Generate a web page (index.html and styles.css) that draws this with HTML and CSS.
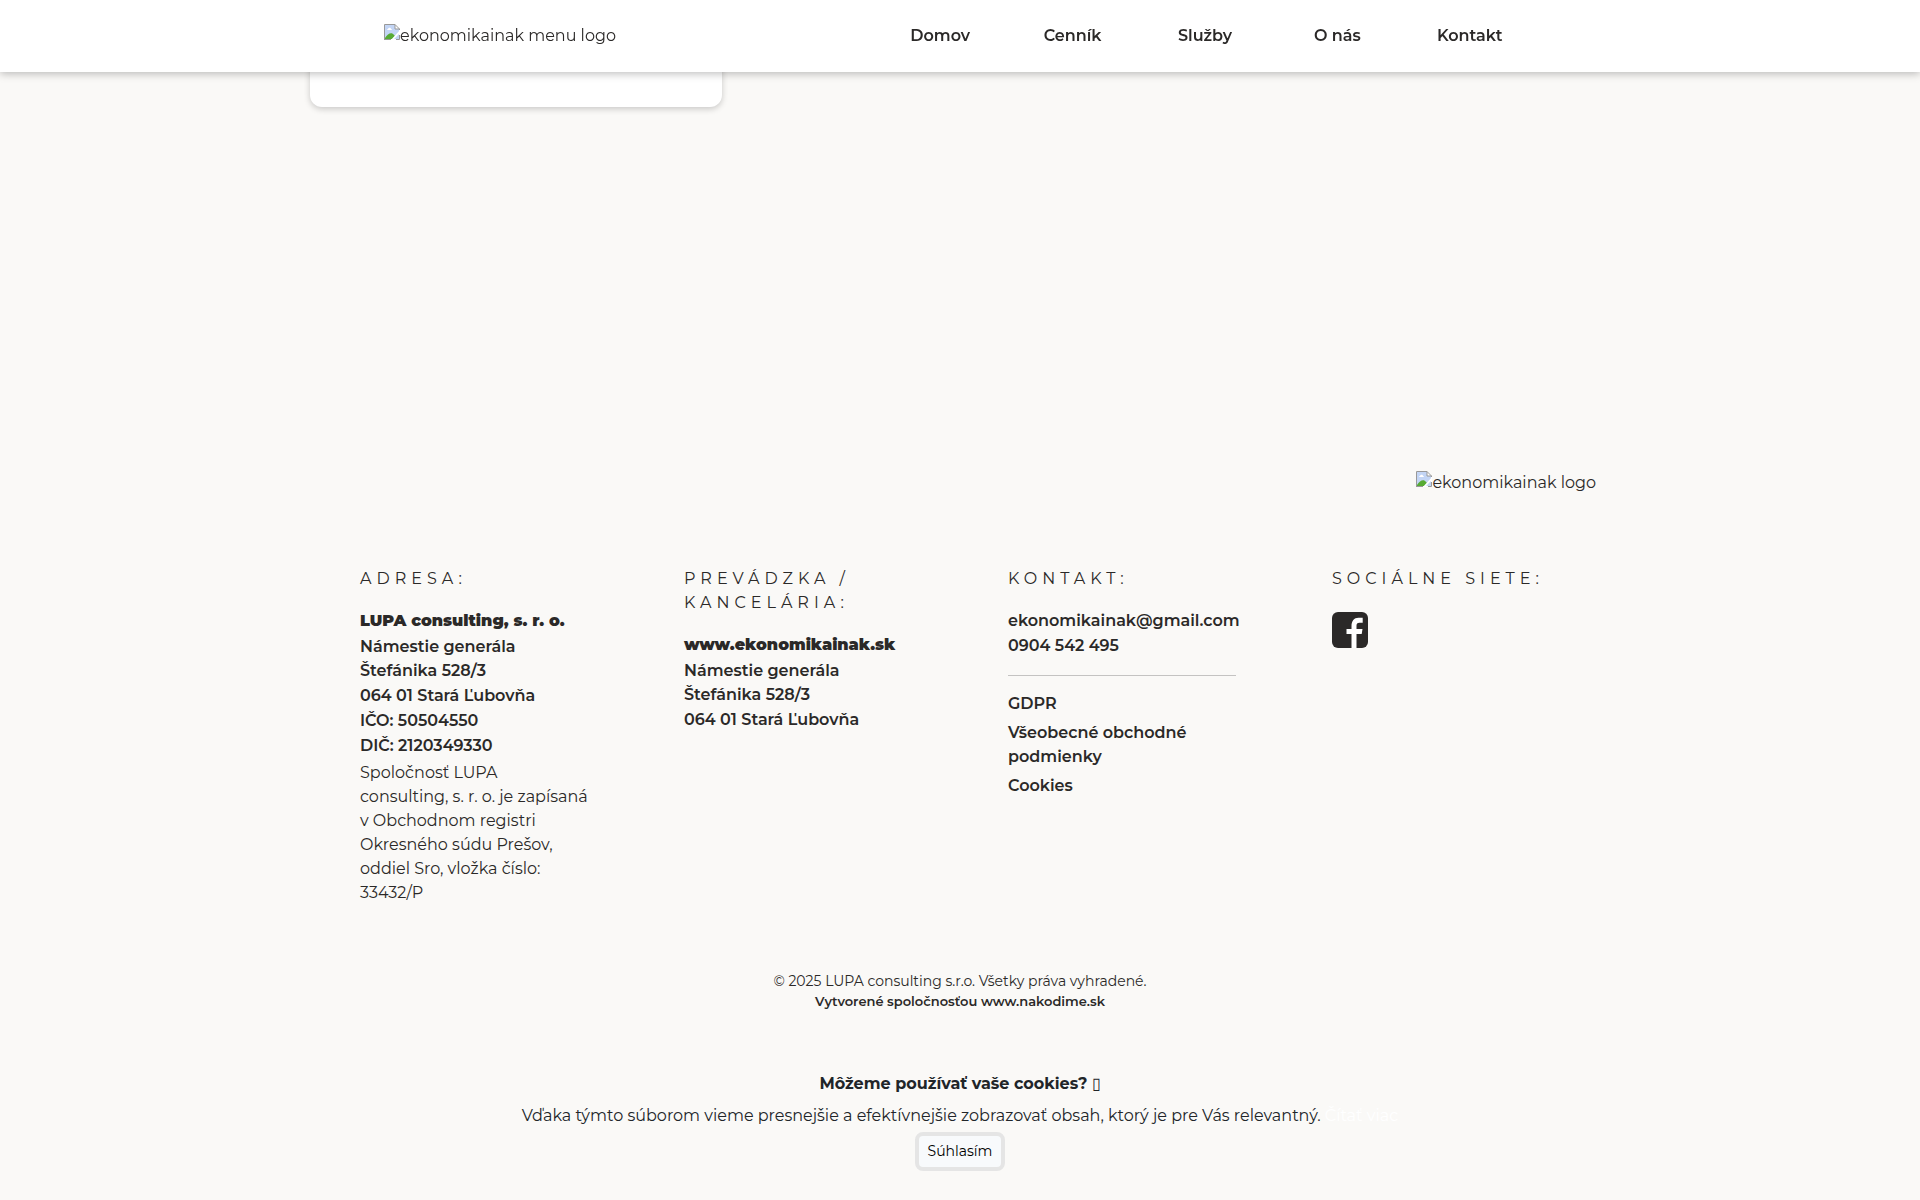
FILE: index.html
```
<!DOCTYPE html>
<html lang="sk">
<head>
    <meta charset="UTF-8">
    <meta name="viewport" content="width=device-width, initial-scale=1.0">
    <title>ekonomikainak</title>
    <link rel="stylesheet" href="styles.css">
</head>
<body>
    <header class="menu">
        <div class="menu-inner">
            <a href="#" class="logo">
                <svg class="logo-icon" viewBox="0 0 16 16" aria-hidden="true">
                    <path d="M0 0h11l5 5v11H0z" fill="#fff"/>
                    <path d="M1 1h10v4h4v10H1z" fill="#c3d5f5"/>
                    <path d="M3 6c0-1 1-1 1-1 1-2 3-1 3 0 1 0 1 1 1 1z" fill="#fff"/>
                    <path d="M1 15v-1c3-5 7-6 9-3l1 1-3 3z" fill="#57ab35"/>
                    <path d="M16 6v3l-7 7H7z" fill="#fff"/>
                    <path d="M.5 15.500V.5h10.500l4.500 4.500v1M11 .5V5h4.500M0 15.500h7M12 15.500h3.500V11" fill="none" stroke="#999"/>
                </svg>
                <span>ekonomikainak menu logo</span>
            </a>
            <nav class="menu-links">
                <a href="#">Domov</a>
                <a href="#">Cenník</a>
                <a href="#">Služby</a>
                <a href="#">O nás</a>
                <a href="#">Kontakt</a>
            </nav>
        </div>
    </header>

    <main class="cards">
        <div class="card"></div>
    </main>

    <footer class="footer container">
        <div class="footer-logo">
            <a href="#" class="logo">
                <svg class="logo-icon" viewBox="0 0 16 16" aria-hidden="true">
                    <path d="M0 0h11l5 5v11H0z" fill="#fff"/>
                    <path d="M1 1h10v4h4v10H1z" fill="#c3d5f5"/>
                    <path d="M3 6c0-1 1-1 1-1 1-2 3-1 3 0 1 0 1 1 1 1z" fill="#fff"/>
                    <path d="M1 15v-1c3-5 7-6 9-3l1 1-3 3z" fill="#57ab35"/>
                    <path d="M16 6v3l-7 7H7z" fill="#fff"/>
                    <path d="M.5 15.500V.5h10.500l4.500 4.500v1M11 .5V5h4.500M0 15.500h7M12 15.500h3.500V11" fill="none" stroke="#999"/>
                </svg>
                <span>ekonomikainak logo</span>
            </a>
        </div>

        <div class="footer-columns">
            <section class="column">
                <h2>Adresa:</h2>
                <p class="company">LUPA consulting, s. r. o.</p>
                <p class="line">Námestie generála Štefánika 528/3</p>
                <p class="line">064 01 Stará Ľubovňa</p>
                <p class="line">IČO: 50504550</p>
                <p class="line">DIČ: 2120349330</p>
                <p class="register">Spoločnosť LUPA<br>consulting, s. r. o. je zapísaná v&nbsp;Obchodnom registri Okresného súdu Prešov, oddiel Sro, vložka číslo: 33432/P</p>
            </section>
            <section class="column">
                <h2>Prevádzka / Kancelária:</h2>
                <p class="company">www.ekonomikainak.sk</p>
                <p class="line">Námestie generála Štefánika 528/3</p>
                <p class="line">064 01 Stará Ľubovňa</p>
            </section>
            <section class="column">
                <h2>Kontakt:</h2>
                <p class="line"><a href="#">ekonomikainak@gmail.com</a></p>
                <p class="line"><a href="#">0904 542 495</a></p>
                <hr>
                <ul class="documents">
                    <li><a href="#">GDPR</a></li>
                    <li><a href="#">Všeobecné obchodné podmienky</a></li>
                    <li><a href="#">Cookies</a></li>
                </ul>
            </section>
            <section class="column">
                <h2>Sociálne siete:</h2>
                <a href="#" class="facebook" aria-label="Facebook">
                    <svg viewBox="0 0 36 36">
                        <rect width="36" height="36" rx="6" fill="#2b2928"/>
                        <path d="M19.500 36V22H14.500v-5h5v-3c0-5 2.500-8.300 7-8.300h4.200v5h-3.200c-2.300 0-3 1-3 3v3.300h6l-.8 5h-5.200v14z" fill="#fff"/>
                    </svg>
                </a>
            </section>
        </div>

        <div class="copyright">
            <p>© 2025 LUPA consulting s.r.o. Všetky práva vyhradené.</p>
            <p><a href="#">Vytvorené spoločnosťou www.nakodime.sk</a></p>
        </div>
    </footer>

    <div class="cookies">
        <p class="cookies-title"><b>Môžeme používať vaše cookies?</b> ▯</p>
        <p>Vďaka týmto súborom vieme presnejšie a efektívnejšie zobrazovať obsah, ktorý je pre Vás relevantný. <a href="#">Čítať viac</a></p>
        <button type="button">Súhlasím</button>
    </div>
</body>
</html>
```
FILE: styles.css
```
* {
    box-sizing: border-box;
    margin: 0;
    padding: 0;
}

body {
    font-family: Montserrat, Inter, sans-serif;
    font-size: 16px;
    line-height: 24px;
    color: #2b2928;
    background-color: #faf9f7;
}

a {
    color: inherit;
    text-decoration: none;
}

.container {
    max-width: 1320px;
    margin: 0 auto;
    padding: 0 12px;
}

/* menu */
.menu {
    position: fixed;
    top: 0;
    left: 0;
    right: 0;
    z-index: 10;
    background: #fff;
    box-shadow: 0 2px 8px rgba(0,0,0,0.25);
}

.menu-inner {
    width: 60%;
    height: 72px;
    margin: 0 auto;
    display: flex;
    align-items: center;
    justify-content: space-between;
}

.logo {
    display: inline-flex;
}

.logo-icon {
    width: 16px;
    height: 16px;
}

.menu-links {
    width: 662px;
    display: grid;
    grid-template-columns: repeat(5, minmax(0, 1fr));
    text-align: center;
    font-weight: 600;
}

.cards {
    max-width: 1300px;
    margin: 0 auto;
}

.card {
    max-width: 412px;
    height: 107px;
    background: #fff;
    border-radius: 12px;
    box-shadow: 0 2px 6px rgba(0,0,0,0.2);
}

/* footer */
.footer-logo {
    display: flex;
    justify-content: flex-end;
    padding: 364px 12px 72px;
}

.footer-columns {
    display: grid;
    grid-template-columns: repeat(4, minmax(0, 1fr));
}

.column {
    padding: 0 48px;
}

.column h2 {
    margin-bottom: 18px;
    font-size: 16px;
    font-weight: 400;
    letter-spacing: 5px;
    text-transform: uppercase;
}

.company {
    margin-bottom: 2px;
    font-weight: 900;
}

.line {
    margin-bottom: 1px;
    font-weight: 600;
}

.register {
    padding-top: 2px;
}

.column hr {
    margin: 17px 0 16px;
    border: 0;
    border-top: 1px solid #c4c3c2;
}

.documents {
    list-style: none;
    display: grid;
    gap: 5px;
    font-weight: 600;
}

.facebook {
    display: block;
    width: 36px;
    height: 36px;
    margin-top: 21px;
}

.facebook svg {
    display: block;
}

.copyright {
    padding: 66px 0 180px;
    font-size: 14px;
    line-height: 20px;
    text-align: center;
}

.copyright a {
    font-size: 13px;
    font-weight: 600;
}

/* cookies */
.cookies {
    position: fixed;
    left: 0;
    right: 0;
    bottom: 0;
    padding: 16px 16px 29px;
    color: #212529;
    background: #faf9f7;
    text-align: center;
}

.cookies p {
    margin-bottom: 4px;
}

.cookies .cookies-title {
    margin-bottom: 8px;
}

.cookies a {
    color: #fff;
}

.cookies button {
    padding: 5px 9px;
    font: inherit;
    font-size: 14px;
    line-height: 21px;
    color: #000;
    background: #f8fafc;
    border: 4px solid #e5e5e5;
    border-radius: 8px;
    cursor: pointer;
}
```
